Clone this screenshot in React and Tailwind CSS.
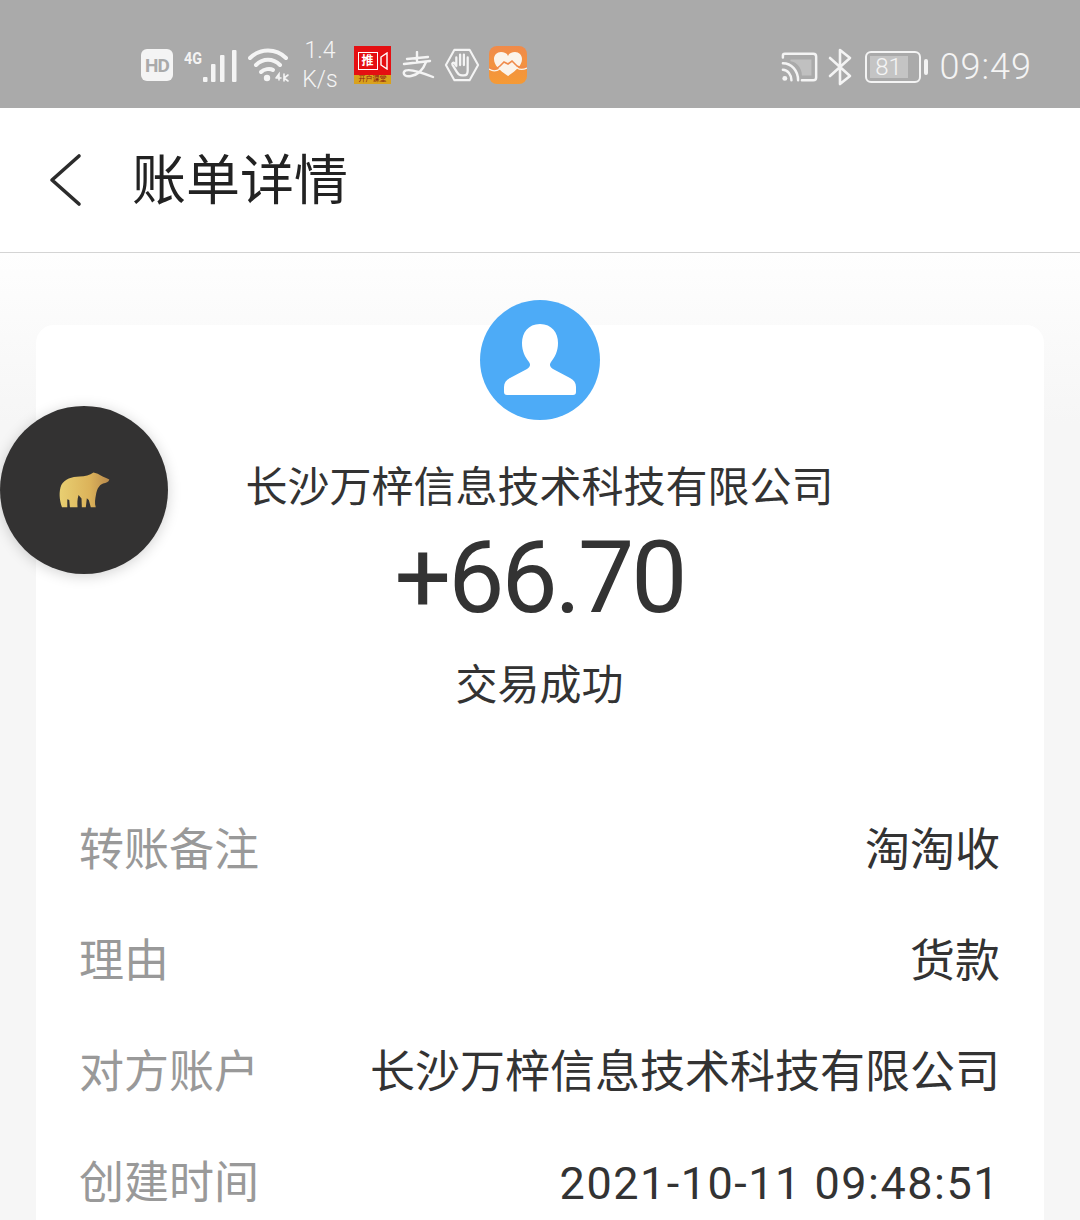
const rows = [
  { label: '转账备注', value: '淘淘收' },
  { label: '理由', value: '货款' },
  { label: '对方账户', value: '长沙万梓信息技术科技有限公司' },
  { label: '创建时间', value: '2021-10-11 09:48:51', mono: true },
];

function HdBadge() {
  return (
    <span className="flex h-[32px] w-[32px] items-center justify-center rounded-[6px] bg-[#f4f4f4] text-[19px] font-bold leading-none tracking-[-1px] text-[#aaaaaa]">
      HD
    </span>
  );
}

function Signal() {
  return (
    <svg width="56" height="36" viewBox="0 0 56 36" className="text-[#f4f4f4]">
      <text x="0" y="17" fontSize="16" fontWeight="700" fill="currentColor" fontFamily="Roboto, sans-serif" textLength="18" lengthAdjust="spacingAndGlyphs">4G</text>
      <g fill="currentColor">
        <rect x="19" y="30" width="4.500" height="5" rx="1" />
        <rect x="27" y="17" width="4.500" height="18" rx="1" />
        <rect x="36" y="8" width="4.500" height="27" rx="1" />
        <rect x="48" y="3" width="4.500" height="32" rx="1" />
      </g>
    </svg>
  );
}

function Wifi() {
  return (
    <svg width="42" height="36" viewBox="0 0 42 36" fill="none" stroke="#f4f4f4" strokeWidth="4" strokeLinecap="round">
      <path d="M2 11C12 1 28 1 38 11" />
      <path d="M8 18C15 11 25 11 32 18" />
      <path d="M13 25C16 22 22 21 25 23" />
      <circle cx="19" cy="31" r="3.200" fill="#f4f4f4" stroke="none" />
      <path d="M28 31l3-4v6M28 31h5M36 27v7M40 28l-4 3 4 3" strokeWidth="1.600" />
    </svg>
  );
}

function PushIcon() {
  return (
    <div className="flex h-[38px] w-[37px] flex-col bg-[#e50f12]">
      <div className="flex flex-1 items-center justify-center gap-[1px]">
        <span className="flex h-[18px] w-[20px] items-center justify-center border border-white text-[12px] font-bold leading-none text-white">推</span>
        <svg width="9" height="18" viewBox="0 0 9 18" fill="none" stroke="#fff" strokeWidth="1.400">
          <path d="M8 1v16L2 13V5z" />
        </svg>
      </div>
      <div className="flex h-[9px] items-center justify-center overflow-hidden bg-[#d9a21c] text-[7px] leading-none text-[#8a1a10]">
        开户课堂
      </div>
    </div>
  );
}

function AlipayIcon() {
  return (
    <svg width="33" height="28" viewBox="0 0 33 28" fill="none" stroke="#f4f4f4" strokeWidth="2.400" strokeLinecap="round" strokeLinejoin="round">
      <path d="M5 8l21-2M15 1v9M2 13l26-3" />
      <path d="M24 11c-3 8-9 13-15 14-5 1-8-1-7-4 2-4 14-1 29 5" />
    </svg>
  );
}

function HandIcon() {
  return (
    <svg width="36" height="36" viewBox="0 0 38 36" fill="none" stroke="#f4f4f4" strokeWidth="2.200" strokeLinecap="round" strokeLinejoin="round">
      <path d="M11 2h16l9 16-9 16H11L2 18z" />
      <path d="M13 19v-9M17 18V7M21 18V7M25 19V10M13 19l-2-3c-1-1-3 0-2 2l5 8c1 2 2 3 5 3h2c3 0 4-2 4-5v-5" strokeWidth="2.400" />
    </svg>
  );
}

function HeartApp() {
  return (
    <div className="flex h-[38px] w-[38px] items-center justify-center overflow-hidden rounded-[8px] bg-[linear-gradient(180deg,#f08a4a,#f59a35)]">
      <svg width="38" height="38" viewBox="0 0 38 38">
        <path d="M19 30C10 24 5 19 5 13c0-4 3-7 7-7 3 0 6 1 7 4 1-3 4-4 7-4 4 0 7 3 7 7 0 6-5 11-14 17z" fill="#fbf3ea" />
        <path d="M0 21c4 3 8 2 11-1l4-4 4 2 4-3 5 5c3 2 6 2 10 0" fill="none" stroke="#f08a4a" strokeWidth="1.600" />
        <path d="M0 23c4 3 8 2 11 0M28 22c3 2 6 2 10 0" fill="none" stroke="#fbf3ea" strokeWidth="1.200" />
      </svg>
    </div>
  );
}

function CastIcon() {
  return (
    <svg width="38" height="32" viewBox="0 0 40 32" fill="none" stroke="#f4f4f4" strokeWidth="2.600" strokeLinecap="round" strokeLinejoin="round">
      <path d="M2 6V4c0-1 1-2 2-2h30c2 0 3 1 3 3v22c0 2-1 3-3 3H22" />
      <path d="M10 8h22v17H22c0-8-5-14-12-15z" fill="#f4f4f4" fillOpacity="0.3" stroke="none" />
      <path d="M2 12c9 0 16 8 16 18M2 19c5 0 9 5 9 11" />
      <circle cx="4" cy="28" r="2.600" fill="#f4f4f4" stroke="none" />
    </svg>
  );
}

function BluetoothIcon() {
  return (
    <svg width="24" height="38" viewBox="0 0 24 38" fill="none" stroke="#f4f4f4" strokeWidth="2.600" strokeLinecap="round" strokeLinejoin="round">
      <path d="M2 10l20 18-10 8V2l10 8L2 28" />
    </svg>
  );
}

function Battery() {
  return (
    <div className="flex items-center gap-[3px]">
      <div className="flex h-[32px] w-[56px] items-center rounded-[6px] border-[2.5px] border-[#f4f4f4] p-[3px]">
        <div className="flex h-full w-[38px] items-center justify-center bg-[#c4c4c4] text-[24px] font-light leading-none text-[#f4f4f4]">
          81
        </div>
      </div>
      <span className="h-[16px] w-[4px] rounded-[2px] bg-[#f4f4f4]" />
    </div>
  );
}

function BearIcon() {
  return (
    <svg width="53" height="40" viewBox="50 60 160 120">
      <defs>
        <linearGradient id="bear" x1="0" x2="1" y1="0" y2="0">
          <stop offset="0" stopColor="#e8cf72" />
          <stop offset="0.6" stopColor="#dcb35a" />
          <stop offset="1" stopColor="#b98a4c" />
        </linearGradient>
      </defs>
      <path
        d="M62 172C54 150 52 125 60 105C70 86 92 80 115 79C132 78 146 76 157 67L170 71C180 78 192 82 205 88C203 96 195 99 186 100C174 105 168 116 165 132C162 148 160 160 164 172L149 172L143 150L137 145L134 172L122 172L121 146L112 135C108 148 108 160 109 172L86 172L84 150L78 148L78 172Z"
        fill="url(#bear)"
      />
    </svg>
  );
}

export default function App() {
  return (
    <div className="relative h-[1220px] w-[1080px] overflow-hidden bg-[#f6f6f6] font-['Roboto','Noto_Sans_CJK_SC',sans-serif]">
      <div className="flex h-[108px] items-center justify-between bg-[#aaaaaa] pl-[141px] pr-[48px] pt-[22px] text-[#f4f4f4]">
        <div className="flex items-center">
          <HdBadge />
          <div className="ml-[11px]"><Signal /></div>
          <div className="ml-[8px]"><Wifi /></div>
          <div className="ml-[10px] flex w-[40px] flex-col items-center text-[23px] font-light leading-[29px]">
            <span>1.4</span>
            <span>K/s</span>
          </div>
          <div className="ml-[14px]"><PushIcon /></div>
          <div className="ml-[11px]"><AlipayIcon /></div>
          <div className="ml-[9px]"><HandIcon /></div>
          <div className="ml-[9px]"><HeartApp /></div>
        </div>
        <div className="mt-[4px] flex items-center">
          <CastIcon />
          <div className="ml-[9px]"><BluetoothIcon /></div>
          <div className="ml-[13px]"><Battery /></div>
          <span className="ml-[12px] text-[36px] font-light leading-none tracking-[1px]">09:49</span>
        </div>
      </div>

      <header className="flex h-[145px] items-center border-b border-[#d4d4d4] bg-white pl-[48px]">
        <svg width="34" height="54" viewBox="0 0 34 54" fill="none" stroke="#2c2c2c" strokeWidth="3.600" strokeLinecap="round" strokeLinejoin="round">
          <path d="M31 3L4 27l27 24" />
        </svg>
        <h1 className="ml-[50px] mt-[3px] text-[54px] font-normal leading-none text-[#222222]">账单详情</h1>
      </header>

      <div className="h-[967px] bg-[linear-gradient(180deg,#fefefe_0px,#f6f6f6_170px)] pt-[72px]">
        <main className="mx-[36px] rounded-t-[18px] bg-white pl-[43px] pr-[44px]">
          <div className="flex flex-col items-center">
            <div className="-mt-[25px] flex h-[120px] w-[120px] items-center justify-center rounded-full bg-[#4dabf7]">
              <svg width="74" height="72" viewBox="0 0 74 72">
                <path
                  d="M37 0c12 0 18 9 18 19 0 8-3 14-7 19-2 3-1 5 2 7l17 9c4 2 6 5 6 9v5c0 2-1 3-3 3H4c-2 0-3-1-3-3v-5c0-4 2-7 6-9l17-9c3-2 4-4 2-7-4-5-7-11-7-19C19 9 25 0 37 0z"
                  fill="#ffffff"
                />
              </svg>
            </div>
            <p className="mt-[43px] text-[42px] leading-[50px] text-[#333333]">长沙万梓信息技术科技有限公司</p>
            <p className="mt-[15px] text-[100px] font-normal leading-[100px] tracking-[-3px] text-[#333333]">+66.70</p>
            <p className="mt-[33px] text-[42px] leading-[50px] text-[#333333]">交易成功</p>
          </div>

          <dl className="mt-[84px]">
            {rows.map((row) => (
              <div key={row.label} className="flex h-[111px] items-center justify-between text-[45px] leading-[50px]">
                <dt className="text-[#999999]">{row.label}</dt>
                <dd className={row.mono ? 'tracking-[1.5px] text-[#333333]' : 'text-[#333333]'}>{row.value}</dd>
              </div>
            ))}
          </dl>
        </main>
      </div>

      <button
        type="button"
        className="absolute left-0 top-[406px] flex h-[168px] w-[168px] items-center justify-center rounded-full bg-[#333232] shadow-[0_2px_14px_rgba(0,0,0,0.18)]"
      >
        <BearIcon />
      </button>
    </div>
  );
}
